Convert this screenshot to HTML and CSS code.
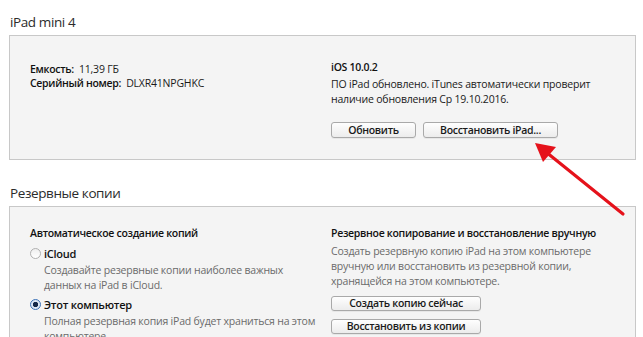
FILE: index.html
```html
<!DOCTYPE html>
<html lang="ru">
<head>
<meta charset="utf-8">
<link rel="stylesheet" href="styles.css">
</head>
<body>
<div class="page">
  <h2 class="section-title">iPad mini 4</h2>
  <div class="panel panel-device">
    <div class="col col-left">
      <div class="line"><b>Емкость:</b>&nbsp; 11,39 ГБ</div>
      <div class="line"><b>Серийный номер:</b>&nbsp; DLXR41NPGHKC</div>
    </div>
    <div class="col">
      <div class="line head">iOS 10.0.2</div>
      <div class="line">ПО iPad обновлено. iTunes автоматически проверит</div>
      <div class="line">наличие обновления Ср 19.10.2016.</div>
      <div class="btn-row">
        <button class="btn btn-update">Обновить</button>
        <button class="btn btn-restore">Восстановить iPad...</button>
      </div>
    </div>
  </div>

  <h2 class="section-title second">Резервные копии</h2>
  <div class="panel panel-backup">
    <div class="col">
      <div class="line head head-auto">Автоматическое создание копий</div>
      <div class="option">
        <span class="radio"></span><span class="opt-label">iCloud</span>
      </div>
      <div class="desc">Создавайте резервные копии наиболее важных<br>данных на iPad в iCloud.</div>
      <div class="option">
        <span class="radio checked"></span><span class="opt-label">Этот компьютер</span>
      </div>
      <div class="desc">Полная резервная копия iPad будет храниться на этом<br>компьютере.</div>
    </div>
    <div class="col">
      <div class="line head head-manual">Резервное копирование и восстановление вручную</div>
      <div class="gray-text">Создать резервную копию iPad на этом компьютере<br>вручную или восстановить из резервной копии,<br>хранящейся на этом компьютере.</div>
      <div class="btn-stack">
        <button class="btn btn-wide">Создать копию сейчас</button>
        <button class="btn btn-wide">Восстановить из копии</button>
      </div>
    </div>
  </div>
</div>
<svg class="arrow" width="643" height="337" viewBox="0 0 643 337">
  <line x1="623" y1="214" x2="546" y2="152" stroke="#e5121b" stroke-width="3.2" stroke-linecap="round"/>
  <polygon points="535,143 556,147 543,162" fill="#e5121b"/>
</svg>
</body>
</html>
```
FILE: styles.css
```css
html, body {
  margin: 0;
  padding: 0;
  background: #ffffff;
  overflow: hidden;
}
body {
  width: 643px;
  height: 337px;
  position: relative;
  font-family: "Open Sans", "Noto Sans", sans-serif;
  font-size: 10.5px;
  letter-spacing: -0.2px;
  color: #1a1a1a;
}
.page {
  padding: 12px 7px 0 9px;
}
.section-title {
  margin: 0 0 3px 1px;
  font-size: 13.5px;
  letter-spacing: -0.4px;
  font-weight: 400;
  line-height: 20px;
  color: #2b2b2b;
}
.section-title.second {
  margin-top: 23px;
}
.panel {
  border: 1px solid #c8c8c8;
  background: #f4f4f4;
  display: grid;
  grid-template-columns: 301px 1fr;
  padding: 0 0 0 20px;
}
.panel-device {
  padding-top: 24px;
  padding-bottom: 21px;
}
.panel-backup {
  padding-top: 19px;
  height: 150px;
  box-sizing: border-box;
}
.col-left {
  padding-top: 2px;
}
.line {
  line-height: 15px;
  white-space: nowrap;
}
.col-left .line {
  line-height: 14px;
}
b, .head {
  font-weight: 600;
  letter-spacing: -0.3px;
  color: #111;
}
.head {
  margin-bottom: 2px;
}
.head-auto {
  margin-bottom: 5px;
}
.head-manual {
  margin-bottom: 3px;
}
.btn-row {
  display: flex;
  gap: 7px;
  margin-top: 15px;
}
.btn {
  height: 16px;
  padding: 0;
  border: 1px solid #a9a9a9;
  border-radius: 3px;
  background: linear-gradient(#fefefe, #ececec);
  font-family: inherit;
  font-size: 10.5px;
  font-weight: 600;
  letter-spacing: -0.3px;
  color: #1a1a1a;
  line-height: 14px;
  box-shadow: 0 1px 0 rgba(0, 0, 0, 0.05);
}
.btn-update { width: 85px; }
.btn-restore { width: 135px; }
.btn-wide {
  width: 150px;
  height: 15px;
  line-height: 13px;
  display: block;
}
.btn-stack {
  display: flex;
  flex-direction: column;
  gap: 8px;
  margin-top: 7px;
}
.option {
  display: flex;
  align-items: center;
  height: 15px;
}
.radio {
  width: 9px;
  height: 9px;
  border-radius: 50%;
  border: 1px solid #b0b0b0;
  background: linear-gradient(#eeeeee, #ffffff);
  margin-right: 3px;
  flex: none;
}
.radio.checked {
  border-color: #3b72b8;
  background: radial-gradient(circle, #13284a 0 2.3px, #dbe6f5 3px);
}
.opt-label {
  font-size: 11px;
  font-weight: 600;
  letter-spacing: -0.25px;
  line-height: 15px;
  color: #111;
}
.desc, .gray-text {
  color: #6b6b6b;
  line-height: 15px;
  white-space: nowrap;
}
.desc {
  padding-left: 14px;
  margin-top: 2px;
  margin-bottom: 4px;
}
.arrow {
  position: absolute;
  left: 0;
  top: 0;
  pointer-events: none;
}
```
